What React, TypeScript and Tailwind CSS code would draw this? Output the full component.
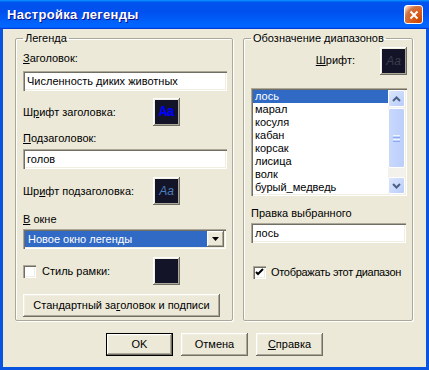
import type { ReactNode } from 'react'

const sunken =
  'bg-white shadow-[inset_1px_1px_0_#aca899,inset_2px_2px_0_#716f64,inset_-1px_-1px_0_#ffffff,inset_-2px_-2px_0_#f1efe2]'
const raised =
  'bg-[#ece9d8] shadow-[inset_-1px_-1px_0_#716f64,inset_1px_1px_0_#ffffff,inset_-2px_-2px_0_#aca899,inset_2px_2px_0_#f1efe2]'
const groupBox =
  'border border-[#aca899] rounded-[2px] shadow-[inset_1px_1px_0_#ffffff,1px_1px_0_#ffffff] h-[289px] pl-[7px] pr-[5px] pt-0'

const animals = ['лось', 'марал', 'косуля', 'кабан', 'корсак', 'лисица', 'волк', 'бурый_медведь']

function U({ children }: { children: ReactNode }) {
  return <span className="underline underline-offset-[1px]">{children}</span>
}

function FontButton({ children }: { children?: ReactNode }) {
  return (
    <div className={`w-[27px] h-[28px] p-[2px] shrink-0 ${raised}`}>
      <div className="w-full h-full bg-[#141428] flex items-center justify-center">{children}</div>
    </div>
  )
}

function Checkbox({ checked }: { checked?: boolean }) {
  return (
    <div className={`w-[13px] h-[13px] shrink-0 flex items-center justify-center ${sunken}`}>
      {checked && (
        <svg width="9" height="9" viewBox="0 0 9 9">
          <path d="M1 4 L3 6 L8 1" fill="none" stroke="#000" strokeWidth="2" />
        </svg>
      )}
    </div>
  )
}

function Button({ children, isDefault, className }: { children: ReactNode; isDefault?: boolean; className?: string }) {
  return (
    <div className={`h-[23px] flex items-center justify-center ${isDefault ? 'border border-black' : ''} ${className ?? ''}`}>
      <div className={`w-full h-full flex items-center justify-center ${raised}`}>{children}</div>
    </div>
  )
}

function ScrollBtn({ down }: { down?: boolean }) {
  return (
    <div className="h-[17px] rounded-[2px] border border-[#ffffff] bg-[linear-gradient(135deg,#dce6fd,#b9cdfa)] flex items-center justify-center">
      <svg width="9" height="6" viewBox="0 0 9 6">
        <path d={down ? 'M1 1 L4.5 4.5 L8 1' : 'M1 5 L4.5 1.5 L8 5'} fill="none" stroke="#4d6185" strokeWidth="2" />
      </svg>
    </div>
  )
}

export default function App() {
  return (
    <div className="w-[429px] h-[370px] flex flex-col bg-[#0854e0] font-['Liberation_Sans',sans-serif] text-[11px] leading-[13px] text-black select-none">
      <div className="h-[29px] shrink-0 flex items-center pl-[7px] pr-[6px] bg-[linear-gradient(180deg,#0997ff,#0053ee_8%,#0050ee_40%,#0066ff_88%,#0066ff_93%,#005bff_95%,#003dd7_96%,#003dd7)]">
        <span className="text-white font-bold text-[13px] tracking-[0.3px] [text-shadow:1px_1px_#0f1089]">Настройка легенды</span>
        <div className="ml-auto w-[19px] h-[19px] rounded-[3px] border border-white bg-[radial-gradient(circle_at_90%_90%,#cc4600_0,#dc6527_55%,#cd7546_70%,#ffccb2_90%,#ffffff_100%)] flex items-center justify-center">
          <svg width="10" height="10" viewBox="0 0 10 10">
            <path d="M1.5 1.5 L8.5 8.5 M8.5 1.5 L1.5 8.5" stroke="#fff" strokeWidth="2" />
          </svg>
        </div>
      </div>

      <div className="flex-1 mx-[3px] mb-[3px] bg-[#ece9d8] flex flex-col">
        <div className="flex pl-[12px] pt-[3px] gap-[10px]">
          <fieldset className={`w-[218px] ${groupBox}`}>
            <legend className="px-[2px]">Легенда</legend>
            <div className="flex flex-col">
              <div className="mt-[7px]">
                <U>З</U>аголовок:
              </div>
              <div className={`mt-[6px] h-[20px] w-[204px] flex items-center pl-[4px] ${sunken}`}>
                Численность диких животных
              </div>
              <div className="mt-[7px] flex items-center">
                <div className="w-[130px]">
                  Ш<U>р</U>ифт заголовка:
                </div>
                <FontButton>
                  <span className="font-['Liberation_Mono',monospace] font-bold text-[14px] text-[#0000ff] tracking-[-1px]">Aa</span>
                </FontButton>
              </div>
              <div className="mt-[6px]">
                <U>П</U>одзаголовок:
              </div>
              <div className={`mt-[4px] h-[20px] w-[204px] flex items-center pl-[4px] ${sunken}`}>голов</div>
              <div className="mt-[8px] flex items-center">
                <div className="w-[130px]">
                  Шр<U>и</U>фт подзаголовка:
                </div>
                <FontButton>
                  <span className="italic text-[12px] text-[#4a7ebb]">Aa</span>
                </FontButton>
              </div>
              <div className="mt-[8px]">
                <U>В</U> окне
              </div>
              <div className={`mt-[3px] h-[20px] w-[203px] p-[2px] flex ${sunken}`}>
                <div className="flex-1 bg-[#316ac5] text-white flex items-center pl-[3px]">Новое окно легенды</div>
                <div className={`w-[17px] flex items-center justify-center ${raised}`}>
                  <svg width="7" height="4" viewBox="0 0 7 4">
                    <path d="M0 0 H7 L3.5 4 Z" fill="#000" />
                  </svg>
                </div>
              </div>
              <div className="mt-[8px] flex items-center">
                <div className="w-[130px] flex items-center">
                  <Checkbox />
                  <span className="ml-[6px]">Стиль рамки:</span>
                </div>
                <FontButton />
              </div>
              <Button className="mt-[9px] w-[197px]">
                Стандартный за<U>г</U>оловок и подписи
              </Button>
            </div>
          </fieldset>

          <fieldset className={`w-[170px] ${groupBox}`}>
            <legend className="px-[2px]">Обозначение диапазонов</legend>
            <div className="flex flex-col">
              <div className="mt-[2px] flex items-center justify-end">
                <span className="mr-[25px] -mt-[2px]">
                  <U>Ш</U>рифт:
                </span>
                <FontButton>
                  <span className="italic text-[12px] text-[#3c3c4c]">Aa</span>
                </FontButton>
              </div>
              <div className={`mt-[13px] w-[156px] h-[108px] p-[2px] flex ${sunken}`}>
                <div className="flex-1 overflow-hidden">
                  {animals.map((a, i) => (
                    <div
                      key={a}
                      className={`h-[13px] pl-[2px] flex items-center ${i === 0 ? 'bg-[#316ac5] text-white' : ''}`}
                    >
                      {a}
                    </div>
                  ))}
                </div>
                <div className="w-[17px] flex flex-col bg-[#f3f1ec]">
                  <ScrollBtn />
                  <div className="mt-[1px] h-[60px] rounded-[2px] border border-white bg-[linear-gradient(90deg,#c9d8fc,#bccffb)] flex flex-col items-center justify-center gap-[1px]">
                    <div className="w-[7px] h-[1px] bg-[#eef3fe]" />
                    <div className="w-[7px] h-[1px] bg-[#8caaf0]" />
                    <div className="w-[7px] h-[1px] bg-[#eef3fe]" />
                    <div className="w-[7px] h-[1px] bg-[#8caaf0]" />
                  </div>
                  <div className="flex-1" />
                  <ScrollBtn down />
                </div>
              </div>
              <div className="mt-[11px]">Правка выбранного</div>
              <div className={`mt-[3px] h-[20px] w-[155px] flex items-center pl-[4px] ${sunken}`}>лось</div>
              <div className="mt-[23px] flex items-center pl-[2px] whitespace-nowrap">
                <Checkbox checked />
                <span className="ml-[5px] tracking-[-0.3px]">Отображать этот диапазон</span>
              </div>
            </div>
          </fieldset>
        </div>

        <div className="mt-[12px] flex justify-center gap-[8px]">
          <Button isDefault className="w-[67px]">
            OK
          </Button>
          <Button className="w-[67px]">Отмена</Button>
          <Button className="w-[67px]">
            <U>С</U>правка
          </Button>
        </div>
      </div>
    </div>
  )
}
